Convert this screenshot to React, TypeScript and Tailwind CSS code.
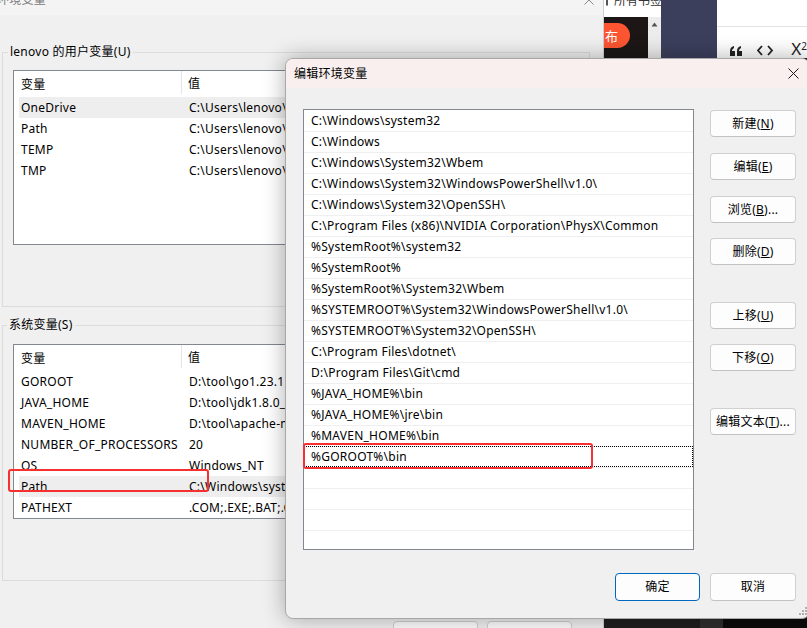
import React from 'react';

const userVars: [string, string][] = [
  ['OneDrive', 'C:\\Users\\lenovo\\OneDrive'],
  ['Path', 'C:\\Users\\lenovo\\AppData\\Local'],
  ['TEMP', 'C:\\Users\\lenovo\\AppData\\Local\\Temp'],
  ['TMP', 'C:\\Users\\lenovo\\AppData\\Local\\Temp'],
];

const sysVars: [string, string][] = [
  ['GOROOT', 'D:\\tool\\go1.23.1.windows-amd64\\go'],
  ['JAVA_HOME', 'D:\\tool\\jdk1.8.0_201'],
  ['MAVEN_HOME', 'D:\\tool\\apache-maven-3.6.3'],
  ['NUMBER_OF_PROCESSORS', '20'],
  ['OS', 'Windows_NT'],
  ['Path', 'C:\\Windows\\system32;C:\\Windows'],
  ['PATHEXT', '.COM;.EXE;.BAT;.CMD;.VBS'],
];

const paths = [
  'C:\\Windows\\system32',
  'C:\\Windows',
  'C:\\Windows\\System32\\Wbem',
  'C:\\Windows\\System32\\WindowsPowerShell\\v1.0\\',
  'C:\\Windows\\System32\\OpenSSH\\',
  'C:\\Program Files (x86)\\NVIDIA Corporation\\PhysX\\Common',
  '%SystemRoot%\\system32',
  '%SystemRoot%',
  '%SystemRoot%\\System32\\Wbem',
  '%SYSTEMROOT%\\System32\\WindowsPowerShell\\v1.0\\',
  '%SYSTEMROOT%\\System32\\OpenSSH\\',
  'C:\\Program Files\\dotnet\\',
  'D:\\Program Files\\Git\\cmd',
  '%JAVA_HOME%\\bin',
  '%JAVA_HOME%\\jre\\bin',
  '%MAVEN_HOME%\\bin',
  '%GOROOT%\\bin',
  '',
  '',
  '',
  '',
];

function VarTable({ rows, selected }: { rows: [string, string][]; selected: number }) {
  return (
    <div className="w-[567px] h-[175px] border border-[#828790] bg-white overflow-hidden">
      <div className="h-[26px] flex items-center">
        <div className="w-[168px] h-[23px] self-start pt-[5px] pl-[7px] border-r border-[#e5e5e5] flex items-center">变量</div>
        <div className="pl-[6px]">值</div>
      </div>
      {rows.map(([k, v], i) => (
        <div
          key={k}
          className={`ml-[5px] h-[21px] flex items-center whitespace-nowrap ${i === selected ? 'bg-[#eeeeee]' : ''}`}
        >
          <div className="w-[163px] pl-[2px]">{k}</div>
          <div className="pl-[7px]">{v}</div>
        </div>
      ))}
    </div>
  );
}

function Btn({ children, primary }: { children: React.ReactNode; primary?: boolean }) {
  return (
    <div
      className={`h-[27px] w-[86px] rounded-[4px] bg-[#fdfdfd] border flex items-center justify-center ${
        primary ? 'border-[#0067c0]' : 'border-[#d0d0d0] border-b-[#c2c2c2]'
      }`}
    >
      {children}
    </div>
  );
}

export default function App() {
  return (
    <div className="relative w-[807px] h-[628px] overflow-hidden bg-[#f0f0f0] text-[12px] leading-[16px] tracking-[0.25px] text-black font-['Noto_Sans','Noto_Sans_CJK_SC',sans-serif]">
      {/* Browser window behind, on the right */}
      <div className="absolute left-[604px] top-0 w-[203px] h-[628px] bg-[#1e1e1e] flex flex-col overflow-hidden">
        <div className="h-[58px] flex">
          <div className="w-[57px] flex flex-col">
            <div className="h-[17px] bg-white flex items-start overflow-hidden">
              <div className="ml-[2px] mt-[-4px] w-[5px] h-[10px] border border-[#555] rounded-[1px]" />
              <div className="ml-[6px] mt-[-7px] text-[#333] whitespace-nowrap tracking-normal">所有书签</div>
            </div>
            <div className="flex-1 flex">
              <div className="w-[44px] bg-[#1c1716] overflow-visible">
                <div className="mt-[6px] ml-[-24px] w-[50px] h-[25px] rounded-full bg-[#fc5531] text-white text-[13px] flex items-center justify-center">
                  发布
                </div>
              </div>
              <div className="w-[13px] bg-[#ececec] flex justify-center pt-[5px]">
                <svg width="7" height="5" viewBox="0 0 7 5">
                  <path d="M3.5 0.5 L6.5 4.5 L0.5 4.5 Z" fill="#555" />
                </svg>
              </div>
            </div>
          </div>
          <div className="w-[61px] bg-[#3c3f5c]" />
          <div className="flex-1 bg-white flex flex-col">
            <div className="h-[27px] border-b border-[#e3e3e3]" />
            <div className="flex-1 flex items-end pb-[1px] pl-[13px] gap-[15px] text-[#222]">
              <svg width="12" height="10" viewBox="0 0 12 10" className="mb-[1px] shrink-0">
                <path d="M0 10 V5 Q0 1 4 0 V2 Q2 3 2 5 H5 V10 Z M7 10 V5 Q7 1 11 0 V2 Q9 3 9 5 H12 V10 Z" fill="#222" />
              </svg>
              <svg width="16" height="11" viewBox="0 0 16 11" className="mb-[1px] shrink-0">
                <path d="M5 1 L1 5.5 L5 10 M11 1 L15 5.5 L11 10" stroke="#222" strokeWidth="1.8" fill="none" />
              </svg>
              <div className="ml-[3px] text-[17px] leading-[17px] whitespace-nowrap tracking-normal">
                X<sup className="text-[10px]">2</sup>
              </div>
            </div>
          </div>
        </div>
        <div className="flex-1" />
        <div className="h-[9px] flex">
          <div className="w-[96px] bg-[#1e1e1e]" />
          <div className="w-[23px] bg-[#2e2e2e]" />
          <div className="flex-1 bg-[#0b0b0b]" />
        </div>
      </div>

      {/* Environment variables window (inactive) */}
      <div className="absolute left-[-10px] top-[-16px] w-[614px] h-[660px] bg-[#f0f0f0] border-r border-[#cfcfcf] flex flex-col">
        <div className="h-[31px] bg-[#f4f4f4] flex items-center justify-between pl-[7px] pr-[9px] shrink-0">
          <span className="text-[#7a7a7a]">环境变量</span>
          <svg width="10" height="10" viewBox="0 0 10 10">
            <path d="M0.5 0.5 L9.5 9.5 M9.5 0.5 L0.5 9.5" stroke="#8a8a8a" strokeWidth="1" />
          </svg>
        </div>
        <div className="pl-[12px] pr-[13px] flex flex-col">
          <fieldset className="mt-[29px] h-[263px] border border-[#dcdcdc] pl-[10px] pt-[10px]">
            <legend className="ml-[-5px] px-[2px]">lenovo 的用户变量(U)</legend>
            <VarTable rows={userVars} selected={0} />
          </fieldset>
          <fieldset className="mt-[10px] h-[264px] border border-[#dcdcdc] pl-[10px] pt-[11px]">
            <legend className="ml-[-6px] px-[2px]">系统变量(S)</legend>
            <VarTable rows={sysVars} selected={5} />
          </fieldset>
          <div className="mt-[40px] flex justify-end gap-[9px] pr-[18px]">
            <div className="h-[27px] w-[85px] rounded-[4px] bg-[#fdfdfd] border border-[#cfcfcf]" />
            <div className="h-[27px] w-[85px] rounded-[4px] bg-[#fdfdfd] border border-[#cfcfcf]" />
          </div>
        </div>
      </div>

      {/* Edit environment variable dialog */}
      <div className="absolute left-[285px] top-[58px] w-[525px] h-[561px] rounded-[8px] bg-[#f0f0f0] border border-[#a8a8a8] shadow-[0_0_22px_rgba(0,0,0,0.32)] flex flex-col overflow-hidden">
        <div className="h-[29px] bg-[#f8efee] flex items-center justify-between pl-[8px] pr-[10px] shrink-0">
          <span>编辑环境变量</span>
          <svg width="11" height="11" viewBox="0 0 11 11">
            <path d="M0.5 0.5 L10.5 10.5 M10.5 0.5 L0.5 10.5" stroke="#1a1a1a" strokeWidth="1" />
          </svg>
        </div>
        <div className="relative flex-1 flex flex-col pl-[17px] pr-[13px] pt-[21px]">
          <div className="flex">
            <div className="w-[391px] h-[441px] border border-[#828790] bg-white overflow-hidden">
              {paths.map((p, i) => (
                <div
                  key={i}
                  className={`h-[21px] flex items-center pl-[7px] whitespace-nowrap ${
                    i > 0 ? 'border-t border-[#efefef]' : ''
                  } ${i === 16 ? 'outline-1 outline-dotted outline-black -outline-offset-1' : ''}`}
                >
                  {p}
                </div>
              ))}
            </div>
            <div className="ml-[16px] w-[86px] pt-[1px] flex flex-col">
              <Btn>
                新建(<u>N</u>)
              </Btn>
              <div className="mt-[16px]">
                <Btn>
                  编辑(<u>E</u>)
                </Btn>
              </div>
              <div className="mt-[16px]">
                <Btn>
                  浏览(<u>B</u>)...
                </Btn>
              </div>
              <div className="mt-[15px]">
                <Btn>
                  删除(<u>D</u>)
                </Btn>
              </div>
              <div className="mt-[37px]">
                <Btn>
                  上移(<u>U</u>)
                </Btn>
              </div>
              <div className="mt-[15px]">
                <Btn>
                  下移(<u>O</u>)
                </Btn>
              </div>
              <div className="mt-[37px]">
                <Btn>
                  编辑文本(<u>T</u>)...
                </Btn>
              </div>
            </div>
          </div>
          <div className="mt-[23px] flex justify-end gap-[10px]">
            <div className="h-[28px] w-[85px] rounded-[4px] bg-[#fdfdfd] border border-[#0067c0] flex items-center justify-center">
              确定
            </div>
            <div className="h-[28px] w-[86px] rounded-[4px] bg-[#fdfdfd] border border-[#d0d0d0] border-b-[#c2c2c2] flex items-center justify-center">
              取消
            </div>
          </div>
          <svg width="9" height="9" viewBox="0 0 9 9" className="absolute right-[1px] bottom-[2px]">
            <rect x="6" y="0" width="2" height="2" fill="#b0b0b0" />
            <rect x="3" y="3" width="2" height="2" fill="#b0b0b0" />
            <rect x="6" y="3" width="2" height="2" fill="#b0b0b0" />
            <rect x="0" y="6" width="2" height="2" fill="#b0b0b0" />
            <rect x="3" y="6" width="2" height="2" fill="#b0b0b0" />
            <rect x="6" y="6" width="2" height="2" fill="#b0b0b0" />
          </svg>
        </div>
      </div>

      {/* Red annotation boxes */}
      <div className="absolute left-[303px] top-[443px] w-[290px] h-[26px] border-2 border-[#f5302f] rounded-[3px]" />
      <div className="absolute left-[8px] top-[469px] w-[201px] h-[23px] border-2 border-[#f5302f] rounded-[3px]" />
    </div>
  );
}
